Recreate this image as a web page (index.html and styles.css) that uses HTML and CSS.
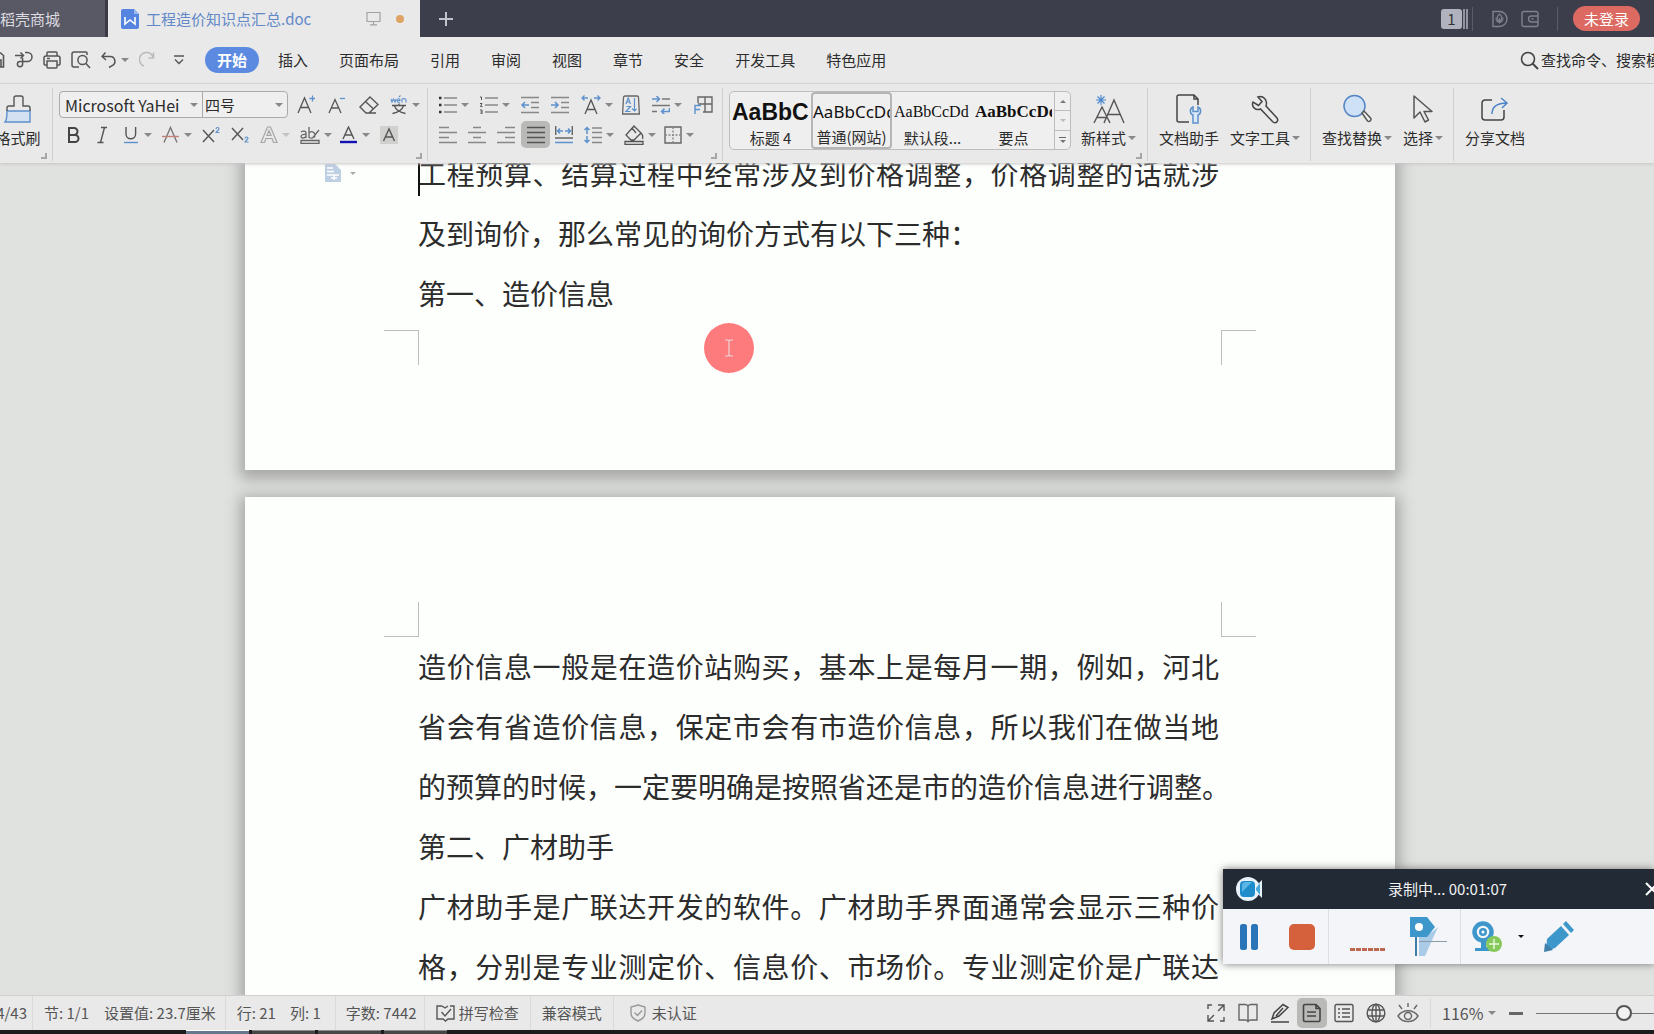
FILE: index.html
```html
<!DOCTYPE html>
<html lang="zh-CN">
<head>
<meta charset="utf-8">
<title>工程造价知识点汇总.doc</title>
<link rel="stylesheet" href="styles.css">
</head>
<body>
<header class="titlebar">
  <button class="tab tab-store">稻壳商城</button>
  <button class="tab tab-doc">
    <svg width="18" height="20" viewBox="0 0 18 20"><path d="M2 0h11l5 5v13a2 2 0 0 1-2 2H2a2 2 0 0 1-2-2V2a2 2 0 0 1 2-2z" fill="#5585e0"/><path d="M13 0l5 5h-5z" fill="#9dbaf0"/><path d="M4 8v7l5-4 5 4V8" fill="none" stroke="#fff" stroke-width="1.6"/></svg>
    <span class="tab-name">工程造价知识点汇总.doc</span>
    <svg width="15" height="15" viewBox="0 0 15 15" fill="none" stroke="#a3a3a6" stroke-width="1.2"><path d="M1 1.500h13v9H1zM7.500 10.500v3M4 13.800h7"/></svg>
    <span class="dot"></span>
  </button>
  <button class="new-tab" aria-label="新建"><svg width="16" height="16" viewBox="0 0 16 16" stroke="#c2c4cb" stroke-width="2"><path d="M8 1v14M1 8h14"/></svg></button>
  <div class="account">
    <span class="count">1</span><span class="bars"></span><span class="vline"></span>
    <svg width="18" height="18" viewBox="0 0 18 18" fill="none" stroke="#7f828e" stroke-width="1.400"><path d="M2 1.500h6.500a7.500 7.500 0 0 1 0 15H2z"/><path d="M8.500 13.500V8M8.500 4c3 2.500 3 5 0 8-3-3-3-5.500 0-8zM5 7.500c0 3 1 4.500 3.500 5M12 7.500c0 3-1 4.500-3.500 5" stroke-width="1.100"/></svg>
    <svg width="18" height="18" viewBox="0 0 18 18" fill="none" stroke="#7f828e" stroke-width="1.400"><path d="M3 1.500h12a2 2 0 0 1 2 2v11a2 2 0 0 1-2 2H3a2 2 0 0 1-2-2v-11a2 2 0 0 1 2-2zM17 6h-6.500a3 3 0 0 0 0 6H17M10.500 9h2"/></svg>
    <span class="vline"></span>
    <button class="login">未登录</button>
  </div>
</header>

<nav class="menubar">
  <div class="quick">
    <button aria-label="保存"><svg width="5" height="18" viewBox="0 0 5 18" fill="none" stroke="#555" stroke-width="1.600"><path d="M0 1.500l3.500 3V16H0M0 9h1v7"/></svg></button>
    <button aria-label="输出"><svg width="18" height="18" viewBox="0 0 18 18" fill="none" stroke="#555" stroke-width="1.500"><path d="M0 4.500h8M5.500 1.500l3 3-3 3M10 1.500h2.500a4.500 4.500 0 0 1 0 9H5a2.600 2.600 0 1 0 2.600 2.600V7"/></svg></button>
    <button aria-label="打印"><svg width="18" height="18" viewBox="0 0 18 18" fill="none" stroke="#555" stroke-width="1.500"><path d="M4 5V2a1 1 0 0 1 1-1h8a1 1 0 0 1 1 1v3M4 14H2a1 1 0 0 1-1-1V7a2 2 0 0 1 2-2h12a2 2 0 0 1 2 2v6a1 1 0 0 1-1 1h-2M4 10h10v6a1 1 0 0 1-1 1H5a1 1 0 0 1-1-1zM4 7.500h3"/></svg></button>
    <button aria-label="打印预览"><svg width="20" height="18" viewBox="0 0 20 18" fill="none" stroke="#555" stroke-width="1.500"><path d="M8 16H3a2 2 0 0 1-2-2V3a2 2 0 0 1 2-2h12a1 1 0 0 1 1 1v2"/><circle cx="11.500" cy="9" r="4.600"/><path d="M15 12.500l4 4.500"/></svg></button>
    <button class="has-caret undo" aria-label="撤销"><svg width="16" height="18" viewBox="0 0 16 18" fill="none" stroke="#555" stroke-width="1.500"><path d="M4.500 1.500L1 5.500l4 3.500M1 5.500h8a4.800 4.800 0 0 1 2 9.200L8 16.500"/></svg></button>
    <button aria-label="重做"><svg width="16" height="18" viewBox="0 0 16 18" fill="none" stroke="#bbb" stroke-width="1.500"><path d="M14.500 1.500v5.500H9.500M14 6A7 7 0 1 0 5 15"/></svg></button>
    <button aria-label="更多"><svg width="12" height="10" viewBox="0 0 12 10" fill="none" stroke="#555" stroke-width="1.400"><path d="M1 1h10M2 4.500l4 4 4-4"/></svg></button>
  </div>
  <button class="menu-item active">开始</button>
  <button class="menu-item">插入</button>
  <button class="menu-item">页面布局</button>
  <button class="menu-item">引用</button>
  <button class="menu-item">审阅</button>
  <button class="menu-item">视图</button>
  <button class="menu-item">章节</button>
  <button class="menu-item">安全</button>
  <button class="menu-item">开发工具</button>
  <button class="menu-item">特色应用</button>
  <button class="command-search"><svg width="19" height="19" viewBox="0 0 19 19" fill="none" stroke="#444" stroke-width="1.600"><circle cx="8" cy="8" r="6.500"/><path d="M12.500 12.500L18 18" stroke-width="2"/></svg><span>查找命令、搜索模板</span></button>
</nav>

<section class="ribbon">
  <div class="group group-clip">
    <button class="big clip-left">
      <svg width="28" height="30" viewBox="0 0 28 30" fill="none" stroke="#555" stroke-width="1.400"><path d="M3 17h23v11H1c2-2 2-5 2-11z" fill="#d3e1f2" stroke="#5d91cc"/><path d="M3 17v-3a2 2 0 0 1 2-2h5V4a2 2 0 0 1 2-2h5a2 2 0 0 1 2 2v8h5a2 2 0 0 1 2 2v3"/></svg>
      <span>格式刷</span>
    </button>
    <i class="launcher"></i>
  </div>

  <div class="group group-font">
    <div class="row">
      <div class="combo">
        <button class="combo-field font-name"><span>Microsoft YaHei</span></button>
        <button class="combo-field font-size"><span>四号</span></button>
      </div>
      <div class="tools loose">
        <button class="tool" aria-label="增大字号"><svg width="18" height="20" viewBox="0 0 18 20" fill="none" stroke="#555" stroke-width="1.300"><path d="M1 18L7.500 3 14 18M3.500 12.500h8"/><path d="M12.500 3.500h6M15.500 .5v6" stroke="#5d91cc"/></svg></button>
        <button class="tool" aria-label="减小字号"><svg width="18" height="20" viewBox="0 0 18 20" fill="none" stroke="#555" stroke-width="1.300"><path d="M1 18L7 4.500 13 18M3.500 13h7"/><path d="M12 3.500h5" stroke="#5d91cc"/></svg></button>
        <button class="tool" aria-label="清除格式"><svg width="20" height="20" viewBox="0 0 20 20" fill="none" stroke="#555" stroke-width="1.400"><path d="M11 2l8 7.500-9 8.500H7l-6-6zM6.500 6.500l8 7.500M8 18h9"/></svg></button>
        <button class="tool has-caret" aria-label="拼音指南"><svg width="18" height="20" viewBox="0 0 18 20" fill="none" stroke="#555" stroke-width="1.300"><path d="M1 4l1 3 1.500-3L5 7l1-3M7 5.500h3C10 3 7 3.500 7 5.500S9 7.500 10 7M9 2l1.500-1.500M12 7.500V4c3-1 4 0 4 1v2.500" stroke="#5d91cc" stroke-width="1.100"/><path d="M2 10.500h14M9 8.500v2M4.500 11c1.500 4 5 6.500 11 7.500M13.500 11c-1.500 4-5 6.500-11 7.500"/></svg></button>
      </div>
    </div>
    <div class="tools">
      <button class="tool" aria-label="加粗"><svg width="18" height="18" viewBox="0 0 18 18" fill="none" stroke="#444" stroke-width="2"><path d="M5 2h5a3.500 3.500 0 0 1 0 7H5zM5 9h6a3.500 3.500 0 0 1 0 7H5z"/></svg></button>
      <button class="tool" aria-label="倾斜"><svg width="18" height="18" viewBox="0 0 18 18" fill="none" stroke="#555" stroke-width="1.400"><path d="M8 1.500h6M4.500 16.500h6M11.500 1.500L7.500 16.500"/></svg></button>
      <button class="tool has-caret" aria-label="下划线"><svg width="18" height="18" viewBox="0 0 18 18" fill="none" stroke="#555" stroke-width="1.400"><path d="M4 1v7a4.800 4.800 0 0 0 9.600 0V1"/><path d="M2 16.500h14" stroke="#5d91cc"/></svg></button>
      <button class="tool has-caret" aria-label="删除线"><svg width="18" height="18" viewBox="0 0 18 18" fill="none" stroke="#777" stroke-width="1.400"><path d="M2 16.500L8.500 1.500l6.500 15"/><path d="M0 10.500h17" stroke="#c2837c"/></svg></button>
      <button class="tool" aria-label="上标"><svg width="18" height="18" viewBox="0 0 18 18" fill="none" stroke="#555" stroke-width="1.400"><path d="M1 4l11 12M12 4L1 16"/><path d="M14 3c0-2 3-2 3 0 0 1-3 2-3 3.500h3.500" stroke="#5d91cc" stroke-width="1.200"/></svg></button>
      <button class="tool" aria-label="下标"><svg width="18" height="18" viewBox="0 0 18 18" fill="none" stroke="#555" stroke-width="1.400"><path d="M1 2l11 12M12 2L1 14"/><path d="M14 12.500c0-2 3-2 3 0 0 1-3 2-3 3.500h3.500" stroke="#5d91cc" stroke-width="1.200"/></svg></button>
      <button class="tool has-caret dim" aria-label="文字效果"><svg width="18" height="18" viewBox="0 0 18 18" fill="none" stroke="#a5a5a5" stroke-width="1.200"><path d="M1 16.500L7.500 1h3L17 16.500h-3.500l-1.500-4H6l-1.500 4zM7 9.500h4L9 4.500z"/></svg></button>
      <button class="tool has-caret" aria-label="突出显示"><svg width="20" height="18" viewBox="0 0 20 18" fill="none" stroke="#666" stroke-width="1.300"><path d="M1 6c2-1.500 5-1 5 1v5M6 8.500c-3-.500-5 .5-5 2s3 2.500 5 0M9 1v11M9 7c2-2.500 6-1 6 2 0 1-.500 2-1 2.500M9 11c1 1.500 3 1.500 4 .5l6-7.500M1 14.500h18v3H1z"/></svg></button>
      <button class="tool has-caret" aria-label="字体颜色"><svg width="18" height="18" viewBox="0 0 18 18" fill="none" stroke="#555" stroke-width="1.400"><path d="M3 13L8.500 1 14 13M5 9h7"/><path d="M0 16h17" stroke="#1212b0" stroke-width="2.400"/></svg></button>
      <button class="tool" aria-label="字符底纹"><svg width="18" height="18" viewBox="0 0 18 18" fill="none" stroke="#555" stroke-width="1.400"><path d="M0 0h18v18H0z" fill="#d0d0ce" stroke="none"/><path d="M3.500 15L9 3l5.500 12M5.500 11h7"/></svg></button>
    </div>
    <i class="launcher"></i>
  </div>

  <div class="group group-para">
    <div class="row tools spaced">
      <button class="tool has-caret" aria-label="项目符号"><svg width="18" height="18" viewBox="0 0 18 18" stroke="#888" stroke-width="1.500"><path d="M5 2h14M5 9h14M5 16h14"/><path d="M0 2h2.500M0 9h2.500M0 16h2.500" stroke="#333" stroke-width="2.400"/></svg></button>
      <button class="tool has-caret" aria-label="编号"><svg width="18" height="18" viewBox="0 0 18 18" stroke="#888" stroke-width="1.500" fill="none"><path d="M5 2h14M5 9h14M5 16h14"/><path d="M0 1h1.500v3M0 7.500h2L.5 10.500h2M0 14h2v4H0M.5 16H2" stroke="#555" stroke-width="1"/></svg></button>
      <button class="tool" aria-label="减少缩进"><svg width="18" height="18" viewBox="0 0 18 18" stroke="#888" stroke-width="1.500" fill="none"><path d="M0 1.500h18M10 6.500h8M10 11.500h8M0 16.500h18"/><path d="M8 9H1M4 6L1 9l3 3" stroke="#5d91cc"/></svg></button>
      <button class="tool" aria-label="增加缩进"><svg width="18" height="18" viewBox="0 0 18 18" stroke="#888" stroke-width="1.500" fill="none"><path d="M0 1.500h18M10 6.500h8M10 11.500h8M0 16.500h18"/><path d="M0 9h7M4 6l3 3-3 3" stroke="#5d91cc"/></svg></button>
      <button class="tool has-caret" aria-label="字符缩放"><svg width="20" height="20" viewBox="0 0 20 20" fill="none" stroke="#555" stroke-width="1.300"><path d="M4 19l6-14 6 14M6 14.500h8"/><path d="M7 3H1M3.500 .5L1 3l2.500 2.500M13 3h6M16.500 .5L19 3l-2.500 2.500" stroke="#5d91cc"/></svg></button>
      <button class="tool" aria-label="排序"><svg width="18" height="20" viewBox="0 0 18 20" fill="none" stroke="#666" stroke-width="1.300"><path d="M3 1h12a1.500 1.500 0 0 1 1.500 1.500L17.400 19H.6L1.500 2.500A1.500 1.500 0 0 1 3 1z"/><path d="M4 9l2.200-6 2.300 6M5 7h3M4.500 11.500h4l-4.500 5h4.500M12.500 3v13M10 13.500l2.500 2.500 2-2" stroke="#5d91cc" stroke-width="1.200"/></svg></button>
      <button class="tool has-caret" aria-label="换行"><svg width="18" height="18" viewBox="0 0 18 18" fill="none" stroke="#777" stroke-width="1.500"><path d="M10 3h8M0 9.500h18M0 15.500h5"/><path d="M0 3h7M4.500 0l3 3-3 3M17.500 12v3.500H10M12.500 12.500l-3 3 3 3" stroke="#5d91cc"/></svg></button>
      <button class="tool" aria-label="制表位"><svg width="20" height="18" viewBox="0 0 20 18" fill="none" stroke="#666" stroke-width="1.400"><path d="M5 7V1h14v15h-9M12 1v15M5 8h14"/><path d="M2 18V9.500h6M2 13.500h5" stroke="#5d91cc"/></svg></button>
    </div>
    <div class="tools">
      <button class="tool" aria-label="左对齐"><svg width="18" height="18" viewBox="0 0 18 18" stroke="#888" stroke-width="1.500"><path d="M0 1.500h10M0 6.500h18M0 11.500h10M0 16.500h18"/></svg></button>
      <button class="tool" aria-label="居中"><svg width="18" height="18" viewBox="0 0 18 18" stroke="#888" stroke-width="1.500"><path d="M5 1.500h8M0 6.500h18M5 11.500h8M0 16.500h18"/></svg></button>
      <button class="tool" aria-label="右对齐"><svg width="18" height="18" viewBox="0 0 18 18" stroke="#888" stroke-width="1.500"><path d="M8 1.500h10M0 6.500h18M8 11.500h10M0 16.500h18"/></svg></button>
      <button class="tool pressed" aria-label="两端对齐"><svg width="18" height="18" viewBox="0 0 18 18" stroke="#555" stroke-width="1.500"><path d="M0 1.500h18M0 6.500h18M0 11.500h18M0 16.500h18"/></svg></button>
      <button class="tool" aria-label="分散对齐"><svg width="18" height="18" viewBox="0 0 18 18" stroke="#888" stroke-width="1.500" fill="none"><path d="M.7 0v9M17.300 0v9M0 12h18" stroke="#666"/><path d="M8 5H3M5 2.500L2.500 5 5 7.500M10 5h5M13 2.500L15.500 5 13 7.500M0 16.500h18" stroke="#5d91cc"/></svg></button>
      <button class="tool has-caret" aria-label="行距"><svg width="18" height="18" viewBox="0 0 18 18" stroke="#888" stroke-width="1.500" fill="none"><path d="M8 2h10M8 6.500h10M8 11.500h10M8 16.500h10"/><path d="M3 8V1.500M.5 4L3 1.500 5.500 4M3 10v6.500M.5 14L3 16.500 5.500 14" stroke="#5d91cc"/></svg></button>
      <button class="tool has-caret" aria-label="底纹颜色"><svg width="20" height="20" viewBox="0 0 20 20" stroke="#555" stroke-width="1.300" fill="none"><path d="M10 1l7 7-7 7H7L2 10zM8 3l4 5M17 8c2 2 2 4 1.500 6M1 16.500h18v3H1z"/></svg></button>
      <button class="tool has-caret" aria-label="边框"><svg width="18" height="18" viewBox="0 0 18 18" stroke="#666" stroke-width="1.400" fill="none"><path d="M1 1h16v16H1z"/><path d="M9 1v16M1 9h16" stroke-dasharray="2 1.500" stroke="#888"/></svg></button>
    </div>
    <i class="launcher"></i>
  </div>

  <div class="group group-styles">
    <div class="gallery">
      <button class="style-cell"><span class="sample s-heading">AaBbC</span><span>标题 4</span></button>
      <button class="style-cell selected"><span class="sample s-web">AaBbCcDd</span><span>普通(网站)</span></button>
      <button class="style-cell"><span class="sample s-serif">AaBbCcDd</span><span>默认段...</span></button>
      <button class="style-cell"><span class="sample s-strong">AaBbCcDd</span><span>要点</span></button>
      <div class="gallery-nav"><button class="up" aria-label="上一行"></button><button class="down" aria-label="下一行"></button><button class="all" aria-label="全部样式"></button></div>
    </div>
    <button class="big">
      <svg width="32" height="30" viewBox="0 0 32 30" fill="none" stroke="#555" stroke-width="1.400"><path d="M1 29l8-16 8 16M4 23.500h9M11 29L21 6l10 23M15 20.500h12"/><path d="M8 1v10M3 6h10M4.500 2.500l7 7M11.500 2.500l-7 7" stroke="#4d8ad0" stroke-width="1.200"/></svg>
      <span class="label-caret">新样式</span>
    </button>
    <i class="launcher"></i>
  </div>

  <div class="group group-big">
    <button class="big">
      <svg width="28" height="30" viewBox="0 0 28 30" fill="none" stroke="#444" stroke-width="1.500"><path d="M14 28H4a2 2 0 0 1-2-2V3a2 2 0 0 1 2-2h15l4 4v6M19 1v4h4"/><path d="M18 13c-4 2-3 7 0 8v8h5v-8c3-1 4-6 0-8v4.500h-5z" fill="#dce9f8" stroke="#5d91cc"/></svg>
      <span>文档助手</span>
    </button>
    <button class="big">
      <svg width="28" height="30" viewBox="0 0 28 30" fill="none" stroke="#444" stroke-width="1.500"><path d="M7 3l4 4.500-3.500 4L2 8c-2 5 3 9 7.500 7L22 28c3 2 6-1 4-4L15 12C17 6 12 1 7 3z"/></svg>
      <span class="label-caret">文字工具</span>
    </button>
  </div>
  <div class="group group-big">
    <button class="big">
      <svg width="30" height="30" viewBox="0 0 30 30" fill="none" stroke="#555" stroke-width="1.500"><circle cx="12.500" cy="12" r="10.500" fill="#cfe1f7" stroke="#5586c4"/><path d="M20 19l2-2 6.500 7c1.500 2-1 4.500-3 3z" fill="#eee"/></svg>
      <span class="label-caret">查找替换</span>
    </button>
    <button class="big">
      <svg width="22" height="30" viewBox="0 0 22 30" fill="none" stroke="#555" stroke-width="1.500"><path d="M2 2v22l6-6 5 10 3.500-2-4.500-8.500h8z" stroke-linejoin="round"/></svg>
      <span class="label-caret">选择</span>
    </button>
  </div>
  <div class="group group-big last">
    <button class="big">
      <svg width="28" height="30" viewBox="0 0 28 30" fill="none" stroke="#444" stroke-width="1.500"><path d="M11 6H4a3 3 0 0 0-3 3v14a3 3 0 0 0 3 3h16a3 3 0 0 0 3-3v-7"/><path d="M11 20c0-7 5-11 15-11M20 4l6 5-5 5" stroke="#4d83c8"/></svg>
      <span>分享文档</span>
    </button>
  </div>
</section>

<main class="workspace">
  <article class="page page-first">
    <p>工程预算、结算过程中经常涉及到价格调整，价格调整的话就涉及到询价，那么常见的询价方式有以下三种：</p>
    <p>第一、造价信息</p>
    <i class="crop bl"></i><i class="crop br"></i>
    <i class="text-caret"></i>
    <span class="para-menu"><svg width="17" height="18" viewBox="0 0 17 18"><path d="M0 0h10l6 6v12H0z" fill="#bfcfe3"/><path d="M2 4h6M2 7.500h7M2 11h12M6 14h6M9 11v5" stroke="#fff" stroke-width="1.400"/></svg></span>
    <span class="pointer"><svg width="10" height="18" viewBox="0 0 10 18" fill="none" stroke="#e9d5d5" stroke-width="1.200"><path d="M1 1h3l1 1 1-1h3M5 2v14M1 17h3l1-1 1 1h3"/></svg></span>
  </article>
  <article class="page page-second">
    <i class="crop tl"></i><i class="crop tr"></i>
    <p class="continues">造价信息一般是在造价站购买，基本上是每月一期，例如，河北省会有省造价信息，保定市会有市造价信息，所以我们在做当地</p>
    <p class="full-line">的预算的时候，一定要明确是按照省还是市的造价信息进行调整。</p>
    <p>第二、广材助手</p>
    <p class="continues">广材助手是广联达开发的软件。广材助手界面通常会显示三种价格，分别是专业测定价、信息价、市场价。专业测定价是广联达</p>
  </article>
</main>

<footer class="statusbar">
  <span class="cell page-no">4/43</span>
  <span class="cell">节: 1/1</span><span class="cell pos">设置值: 23.7厘米</span>
  <span class="cell ruled line-no">行: 21</span><span class="cell">列: 1</span>
  <span class="cell ruled words">字数: 7442</span>
  <button class="cell ruled"><svg width="19" height="18" viewBox="0 0 19 18" fill="none" stroke="#555" stroke-width="1.400"><path d="M6 2H1v13h6l2.500 2 2.500-2h6V2h-4M6 2l3 2 3-2"/><path d="M5.500 8l3.500 4 6-7"/></svg>拼写检查</button>
  <button class="cell ruled">兼容模式</button>
  <button class="cell ruled auth"><svg width="16" height="18" viewBox="0 0 16 18" fill="none" stroke="#999" stroke-width="1.400"><path d="M8 1l7 2v6c0 4-3 6.500-7 8-4-1.500-7-4-7-8V3zM4.500 8.500L7.500 11.500l4.500-5"/></svg>未认证</button>
  <div class="views">
    <button aria-label="全屏"><svg width="18" height="18" viewBox="0 0 18 18" fill="none" stroke="#555" stroke-width="1.400"><path d="M11 1h6v6M17 1l-6 6M1 11v6h6M1 17l6-6M1 5V1h4M17 13v4h-4"/></svg></button>
    <button aria-label="阅读版式"><svg width="20" height="20" viewBox="0 0 20 20" fill="none" stroke="#666" stroke-width="1.400"><path d="M10 3v16M10 3c-1-1.500-2-1.500-3-1.500H1V17h6c1.500 0 2.500.5 3 1.500.5-1 1.500-1.500 3-1.500h6V1.500h-6c-1 0-2 0-3 1.500z"/></svg></button>
    <button aria-label="写作模式"><svg width="20" height="20" viewBox="0 0 20 20" fill="none" stroke="#444" stroke-width="1.500"><path d="M2 16l2-6L13 1.500 18 4.500 9 13zM13 5l-7 8M1 19h18"/></svg></button>
    <button class="pressed" aria-label="页面视图"><svg width="20" height="20" viewBox="0 0 20 20" fill="none" stroke="#444" stroke-width="1.600"><path d="M3 1.500h11l4 4V17a1.500 1.500 0 0 1-1.500 1.500H3A1.500 1.500 0 0 1 1.500 17V3A1.500 1.500 0 0 1 3 1.500zM14 1.500v4h4M5 9h9M5 13h9"/></svg></button>
    <button aria-label="大纲"><svg width="20" height="20" viewBox="0 0 20 20" fill="none" stroke="#555" stroke-width="1.400"><rect x="1" y="1.500" width="18" height="17" rx="1.500"/><path d="M4 6h2M8 6h8M4 10h2M8 10h8M4 14h2M8 14h8"/></svg></button>
    <button aria-label="Web版式"><svg width="20" height="20" viewBox="0 0 20 20" fill="none" stroke="#555" stroke-width="1.400"><circle cx="10" cy="10" r="8.800"/><ellipse cx="10" cy="10" rx="4" ry="8.800"/><path d="M10 1v18M2 7h16M2 13h16"/></svg></button>
    <button aria-label="护眼模式"><svg width="22" height="20" viewBox="0 0 22 20" fill="none" stroke="#666" stroke-width="1.400"><path d="M1 13c5-7 15-7 20 0-5 7.500-15 7.500-20 0zM11 0v4M2 2l3 4M20 2l-3 4"/><circle cx="11" cy="13" r="3.500"/></svg></button>
  </div>
  <div class="zoom">
    <button class="zoom-value has-caret">116%</button>
    <button class="minus" aria-label="缩小"></button>
    <input type="range" min="0" max="100" value="78" aria-label="显示比例">
  </div>
</footer>
<div class="taskbar"><i class="on"></i><i></i><i></i><i></i></div>

<aside class="recorder">
  <div class="rec-head">
    <svg width="28" height="26" viewBox="0 0 28 26"><circle cx="13" cy="13" r="12" fill="#e8f2fa"/><path d="M18 13l9-9v18z" fill="#e8f2fa"/><rect x="5" y="5" width="15" height="16" rx="4" fill="#1e8ccb"/><path d="M7 10a4 4 0 0 1 4-4h6l-10 10z" fill="#5bb6e6"/><path d="M21 12l4-5v12l-4-5z" fill="#4aa9dc"/></svg>
    <span class="rec-title">录制中... 00:01:07</span>
    <button class="rec-close" aria-label="关闭"><svg width="16" height="16" viewBox="0 0 16 16" stroke="#fff" stroke-width="2"><path d="M2 2l12 12M14 2L2 14"/></svg></button>
  </div>
  <div class="rec-body">
    <div class="rec-part">
      <button aria-label="暂停"><svg width="18" height="26" viewBox="0 0 18 26" fill="#2a74b8"><rect width="7" height="26" rx="2.500"/><rect x="11" width="7" height="26" rx="2.500"/></svg></button>
      <button aria-label="停止"><svg width="26" height="26" viewBox="0 0 26 26"><rect width="26" height="26" rx="5" fill="#d5613c"/></svg></button>
    </div>
    <div class="rec-part mid">
      <span class="level"></span>
      <svg width="37" height="40" viewBox="0 0 37 40"><path d="M22 15l6-5-13 29H9V20z" fill="#a9cbe8"/><path d="M0 0h17l8 10-8 10H0z" fill="#3d97cb"/><circle cx="9" cy="10" r="4" fill="#fff"/><path d="M6 20v19" stroke="#3f7ea8" stroke-width="2"/><path d="M9 24.500h28" stroke="#8a9aa6"/></svg>
    </div>
    <div class="rec-part tail">
      <button class="cam" aria-label="摄像头"><svg width="30" height="31" viewBox="0 0 30 31"><circle cx="11" cy="11" r="8.500" fill="none" stroke="#3d97cb" stroke-width="4.500"/><circle cx="11" cy="11" r="4" fill="#3d97cb"/><circle cx="11" cy="11" r="1.500" fill="#fff"/><path d="M9 20h5v6h4v4H3v-3h6z" fill="#3d97cb"/><circle cx="22" cy="23" r="8" fill="#86c95a"/><path d="M22 18v10M17 23h10" stroke="#e8f7dc" stroke-width="1.500"/></svg></button>
      <button aria-label="画笔"><svg width="30" height="31" viewBox="0 0 30 31"><path d="M3 18L17 5l8 9-14 13-9 3z" fill="#3d97cb"/><path d="M19 3l3-3 8 9-3 3z" fill="#3d97cb"/><path d="M0 31l1-9 8 7z" fill="#3f7ea8"/></svg></button>
    </div>
  </div>
</aside>
</body>
</html>
```
FILE: styles.css
```css
* { box-sizing: border-box; }

html, body { height: 100%; margin: 0; }

body {
  display: flex;
  flex-direction: column;
  overflow: hidden;
  background: #e0e2df;
  color: #2c2c2c;
  font: 15px/20px "Noto Sans CJK SC", sans-serif;
}

button {
  padding: 0;
  border: 0;
  background: none;
  color: inherit;
  font: inherit;
  white-space: nowrap;
}

svg { display: block; flex: none; }

.has-caret, .label-caret { display: flex; align-items: center; }

.has-caret::after, .label-caret::after, .combo-field::after {
  content: "";
  flex: none;
  border: 4px solid transparent;
  border-top-color: #888;
  border-bottom: 0;
}

/* title bar */
.titlebar {
  display: flex;
  flex: none;
  height: 37px;
  background: #3c3f4b;
}

.tab-store {
  width: 108px;
  border-right: 3px solid #3c3a46;
  background: #595865;
  color: #dcdce0;
  text-align: left;
}

.tab-doc {
  display: flex;
  align-items: center;
  width: 312px;
  padding: 0 16px 0 13px;
  background: #e9e9e9;
  color: #6288c8;
}

.tab-name { flex: 1; padding-left: 7px; text-align: left; }

.dot {
  width: 8px;
  height: 8px;
  margin-left: 15px;
  border-radius: 50%;
  background: #dfa463;
}

.new-tab { padding-left: 18px; }

.account {
  display: flex;
  align-items: center;
  margin-left: auto;
  padding-right: 14px;
}

.count {
  width: 21px;
  border-radius: 3px;
  background: #b0b3bd;
  color: #333;
  text-align: center;
}

.bars {
  width: 5px;
  height: 20px;
  margin-left: 1px;
  border: solid #92959f;
  border-width: 0 2px;
}

.vline { width: 1px; height: 24px; margin: 0 18px 0 4px; background: #5a5d69; }
.account svg + svg { margin-left: 12px; }
.account svg + .vline { margin: 0 15px 0 18px; }

.login {
  height: 25px;
  padding: 0 11px;
  border-radius: 13px;
  background: #dc6a62;
  color: #fff;
}

/* menu bar */
.menubar {
  display: flex;
  flex: none;
  align-items: center;
  height: 47px;
  overflow: hidden;
  border-bottom: 1px solid #d6d6d6;
  background: #e9e9e9;
}

.quick { display: flex; flex: none; align-items: center; gap: 10px; width: 205px; }
.quick .undo { width: 28px; gap: 4px; }
.quick button:last-child { margin-left: 8px; }

.menu-item { margin-right: 31px; }

.menu-item.active {
  margin-right: 19px;
  padding: 3px 12px;
  border-radius: 13px;
  background: #5b8ae0;
  color: #fff;
  font-weight: 700;
}

.command-search {
  display: flex;
  align-items: center;
  gap: 2px;
  width: 134px;
  margin-left: auto;
}

/* ribbon */
.ribbon {
  position: relative;
  z-index: 1;
  display: flex;
  flex: none;
  height: 79px;
  padding: 4px 0 2px;
  background: #e9e9e9;
  box-shadow: 0 1px 3px #c4c4c4;
}

.group {
  position: relative;
  display: flex;
  flex: none;
  border-right: 1px solid #cfcfcf;
}

.group.last { border-right: 0; }

.launcher {
  position: absolute;
  right: 5px;
  bottom: 2px;
  width: 6px;
  height: 6px;
  border: solid #a5a5a5;
  border-width: 0 2px 2px 0;
}

.big {
  display: flex;
  flex-direction: column;
  align-items: center;
  gap: 4px;
  padding-top: 6px;
  justify-content: flex-start;
}

.label-caret { gap: 2px; }
.group-clip { width: 53px; }
.clip-left { width: 36px; }
.group-font, .group-para { flex-direction: column; gap: 3px; padding-top: 3px; }
.group-font { width: 375px; padding-left: 6px; }
.group-para { width: 295px; padding-left: 11px; }
.row { display: flex; height: 27px; }
.tools { display: flex; align-items: center; }
.group-font > .tools { padding-left: 5px; }
.tools.loose { gap: 2px; padding-left: 9px; }
.tools.spaced { gap: 1px; }

.tool {
  display: flex;
  flex: none;
  align-items: center;
  width: 29px;
  height: 27px;
}

.tool.has-caret { width: 40px; gap: 4px; }
.tool.dim::after { border-top-color: #c4c4c4; }

.pressed {
  border-radius: 5px;
  background: #b9b9b7;
  justify-content: center;
}

.tool.pressed { margin: 0 5px 0 -5px; }

.combo {
  display: flex;
  flex: none;
  width: 229px;
  border: 1px solid #ababab;
  border-radius: 4px;
  background: #efefef;
}

.combo-field {
  display: flex;
  align-items: center;
  justify-content: space-between;
  padding: 0 4px;
}

.font-name {
  width: 143px;
  padding-left: 5px;
  border-right: 1px solid #ababab;
  font-size: 16px;
}

.font-size { flex: 1; padding-left: 2px; }

.gallery {
  display: flex;
  width: 342px;
  height: 59px;
  margin: 3px 10px 0 6px;
  border: 1px solid #bdbdbd;
  border-radius: 5px;
  background: #efefef;
}

.group-styles { width: 425px; }

.style-cell {
  display: flex;
  flex-direction: column;
  align-items: center;
  gap: 2px;
  width: 81px;
  padding: 3px 1px 0;
  border: 1px solid transparent;
}

.style-cell.selected { border: 2px solid #b5b5b5; border-radius: 4px; padding: 2px 0 0; }

.sample {
  align-self: stretch;
  overflow: hidden;
  color: #111;
  text-align: left;
}

.s-heading { font: 700 23px/32px "Liberation Sans", sans-serif; }
.s-web { font: 17px/32px "Noto Sans", sans-serif; }
.s-serif { font: 16px/32px "Liberation Serif", serif; }
.s-strong { font: 700 17px/32px "Liberation Serif", serif; }

.gallery-nav {
  display: flex;
  flex: 1;
  flex-direction: column;
  border-left: 1px solid #bdbdbd;
}

.gallery-nav button {
  display: flex;
  flex: 1;
  align-items: center;
  justify-content: center;
}

.gallery-nav button + button { border-top: 1px solid #bdbdbd; }

.gallery-nav button::after {
  content: "";
  border: 3px solid transparent;
  border-top-color: #777;
  border-bottom: 0;
}

.gallery-nav .up::after { transform: rotate(180deg); }
.gallery-nav .down::after { border-top-color: #bbb; }

.gallery-nav .all { flex-direction: column; gap: 2px; }
.gallery-nav .all::before { content: ""; width: 7px; height: 1px; background: #666; }

.group-big { gap: 11px; padding: 0 10px 0 11px; }

/* document */
.workspace {
  flex: 1;
  min-height: 0;
  overflow: hidden;
  padding-right: 14px;
}

.page {
  position: relative;
  width: 1150px;
  margin: 0 auto 27px;
  padding: 0 176px 0 173px;
  background: #fdfffc;
  box-shadow: 0 4px 14px 5px #a6a7a5;
  font-size: 28px;
  line-height: 60px;
}

.page p { margin: 0; text-align: justify; }
.page .continues { text-align-last: justify; }
.full-line { white-space: nowrap; }

.page-first { margin-top: -20px; padding-bottom: 147px; }
.page-second { padding-top: 139px; }

.crop { position: absolute; width: 35px; height: 35px; border: 0 solid #bdbebc; }
.bl, .tl { left: 139px; border-right-width: 1px; }
.br, .tr { right: 139px; border-left-width: 1px; }
.bl, .br { bottom: 105px; border-top-width: 1px; }
.tl, .tr { top: 105px; border-bottom-width: 1px; }

.text-caret {
  position: absolute;
  top: 20px;
  left: 173px;
  width: 2px;
  height: 33px;
  background: #111;
}

.para-menu {
  position: absolute;
  top: 21px;
  left: 80px;
  display: flex;
  align-items: center;
  gap: 8px;
}

.para-menu::after {
  content: "";
  border: 3px solid transparent;
  border-top-color: #aaa;
  border-bottom: 0;
}

.pointer {
  position: absolute;
  top: 180px;
  left: 459px;
  display: grid;
  width: 50px;
  height: 50px;
  place-items: center;
  border-radius: 50%;
  background: #fd7b7c;
}

/* status bar */
.statusbar {
  position: relative;
  display: flex;
  flex: none;
  align-items: center;
  height: 35px;
  overflow: hidden;
  border-top: 1px solid #cfcfcd;
  background: #e9e9e9;
  color: #555;
}

.cell {
  display: flex;
  flex: none;
  align-items: center;
  gap: 4px;
  height: 34px;
  padding: 0 4px 0 11px;
}

.page-no {
  justify-content: flex-end;
  width: 33px;
  padding: 0 5px 0 0;
  border-right: 1px solid #dadada;
}

.pos { padding-right: 9px; }
.ruled { padding-right: 11px; border-left: 1px solid #dadada; }
.line-no { padding-right: 3px; }
.words { margin-left: 10px; padding: 0 7px 0 10px; }
.auth { gap: 6px; padding-left: 16px; }

.views {
  display: flex;
  flex: none;
  align-items: center;
  gap: 2px;
  margin-left: auto;
  padding-right: 7px;
  border-right: 1px solid #dadada;
}

.views button {
  display: grid;
  width: 30px;
  height: 30px;
  place-items: center;
}

.zoom { display: flex; flex: none; align-items: center; width: 223px; padding-left: 11px; }
.zoom-value { gap: 5px; font-size: 16px; }
.minus { width: 14px; height: 3px; margin: 0 13px; background: #666; }

.zoom input {
  flex: 1;
  min-width: 0;
  height: 18px;
  margin: 0;
  appearance: none;
  background: linear-gradient(#777, #777) center / 100% 1px no-repeat;
}

.zoom input::-webkit-slider-thumb {
  width: 16px;
  height: 16px;
  appearance: none;
  border: 2px solid #555;
  border-radius: 50%;
  background: #f2f2f2;
}

.taskbar {
  display: flex;
  flex: none;
  gap: 3px;
  height: 4px;
  padding-left: 186px;
  background: #1c1c1e;
}

.taskbar i { width: 63px; border-top: 1px solid #8c8c8c; background: #474747; }
.taskbar .on { border-top-color: #fff; background: #66788e; }

/* floating recorder panel */
.recorder {
  position: fixed;
  right: 0;
  bottom: 70px;
  z-index: 2;
  width: 431px;
  background: #f4f5f9;
  box-shadow: 0 0 8px #777;
}

.rec-head {
  display: flex;
  align-items: center;
  height: 40px;
  padding-left: 12px;
  overflow: hidden;
  background: #212a35;
  color: #f2f2f2;
}

.rec-title { flex: 1; padding-right: 12px; text-align: center; }
.rec-close { width: 10px; }
.rec-body { display: flex; height: 55px; }

.rec-part {
  display: flex;
  align-items: center;
  gap: 31px;
  padding: 0 13px 0 17px;
  border-right: 1px solid #dddee2;
}

.rec-part.mid { gap: 25px; padding: 0 13px 0 21px; }
.rec-part.tail { border-right: 0; gap: 42px; padding-left: 11px; }

.level {
  align-self: flex-end;
  width: 35px;
  height: 3px;
  margin-bottom: 13px;
  background: repeating-linear-gradient(90deg, #bf6650 0 5px, transparent 5px 6px);
}

.cam { position: relative; }

.cam::after {
  content: "";
  position: absolute;
  top: 14px;
  right: -22px;
  border: 3px solid transparent;
  border-top-color: #111;
  border-bottom: 0;
}
```
